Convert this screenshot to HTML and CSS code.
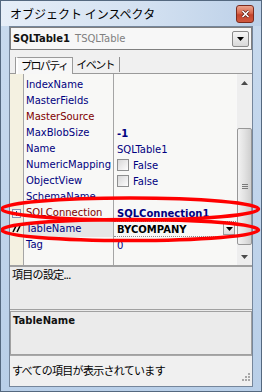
FILE: index.html
```html
<!DOCTYPE html>
<html lang="ja">
<head>
  <meta charset="UTF-8" />
  <title>オブジェクト インスペクタ</title>
  <link rel="stylesheet" href="styles.css">
</head>
<body>
  <div class="window">
    <div class="titlebar">
      <span class="title">オブジェクト インスペクタ</span>
      <span class="close">
        <svg width="9" height="8" viewBox="0 0 9 8"><path d="M1.5 1 L7.5 7 M7.5 1 L1.5 7" stroke="#5a1a10" stroke-width="3"/><path d="M1.5 1 L7.5 7 M7.5 1 L1.5 7" stroke="#fff" stroke-width="1.6"/></svg>
      </span>
    </div>

    <div class="client">
      <div class="combo">
        <span class="combo-name">SQLTable1</span>
        <span class="combo-type">TSQLTable</span>
        <span class="combo-btn"><svg width="7" height="4" viewBox="0 0 7 4"><path d="M0 0 H7 L3.5 4 Z" fill="#000"/></svg></span>
      </div>

      <div class="tabs">
        <span class="tab active">プロパティ</span>
        <span class="tab">イベント</span>
      </div>

      <div class="inspector">
        <div class="grid">
          <div class="row ghost"><span class="gutter"></span><span class="name"></span><span class="value"></span></div>
          <div class="row"><span class="gutter"></span><span class="name">IndexName</span><span class="value"></span></div>
          <div class="row"><span class="gutter"></span><span class="name">MasterFields</span><span class="value"></span></div>
          <div class="row"><span class="gutter"></span><span class="name link">MasterSource</span><span class="value"></span></div>
          <div class="row"><span class="gutter"></span><span class="name">MaxBlobSize</span><span class="value bold">-1</span></div>
          <div class="row"><span class="gutter"></span><span class="name">Name</span><span class="value">SQLTable1</span></div>
          <div class="row"><span class="gutter"></span><span class="name">NumericMapping</span><span class="value"><span class="check"></span>False</span></div>
          <div class="row"><span class="gutter"></span><span class="name">ObjectView</span><span class="value"><span class="check"></span>False</span></div>
          <div class="row"><span class="gutter"></span><span class="name">SchemaName</span><span class="value"></span></div>
          <div class="row">
            <span class="gutter"><svg width="9" height="9" viewBox="0 0 9 9"><rect x="0.5" y="0.5" width="8" height="8" fill="#f4f6fb" stroke="#8593b5"/><path d="M2 4.5 H7 M4.5 2 V7" stroke="#1d2f7a"/></svg></span>
            <span class="name link">SQLConnection</span><span class="value bold">SQLConnection1</span>
          </div>
          <div class="row selected">
            <span class="gutter"><svg width="10" height="8" viewBox="0 0 10 8"><path d="M1 7 L4 1 M5 7 L8 1" stroke="#000" stroke-width="1.6"/></svg></span>
            <span class="name">TableName</span>
            <span class="value bold black">BYCOMPANY<span class="drop"><svg width="7" height="4" viewBox="0 0 7 4"><path d="M0 0 H7 L3.5 4 Z" fill="#000"/></svg></span></span>
          </div>
          <div class="row"><span class="gutter"></span><span class="name">Tag</span><span class="value">0</span></div>
          <div class="row filler"><span class="gutter"></span><span class="name"></span><span class="value"></span></div>
        </div>

        <div class="scrollbar">
          <span class="arrow"><svg width="7" height="4" viewBox="0 0 7 4"><path d="M0 4 H7 L3.5 0 Z" fill="#4a4a4a"/></svg></span>
          <span class="thumb"><span class="grip"></span></span>
          <span class="track"></span>
          <span class="arrow"><svg width="7" height="4" viewBox="0 0 7 4"><path d="M0 0 H7 L3.5 4 Z" fill="#4a4a4a"/></svg></span>
        </div>
      </div>

      <div class="desc">項目の設定...</div>
      <div class="help"><b>TableName</b></div>
      <div class="status">
        すべての項目が表示されています
        <svg class="sizegrip" width="10" height="10" viewBox="0 0 10 10">
          <rect x="7" y="7" width="2" height="2" fill="#a8a8a8"/>
          <rect x="4" y="7" width="2" height="2" fill="#a8a8a8"/>
          <rect x="7" y="4" width="2" height="2" fill="#a8a8a8"/>
          <rect x="1" y="7" width="2" height="2" fill="#a8a8a8"/>
          <rect x="4" y="4" width="2" height="2" fill="#a8a8a8"/>
          <rect x="7" y="1" width="2" height="2" fill="#a8a8a8"/>
        </svg>
      </div>
    </div>

    <!-- hand drawn highlight marks -->
    <svg class="marks" width="262" height="392" viewBox="0 0 262 392">
      <ellipse cx="130" cy="209" rx="128.5" ry="11" fill="none" stroke="#ff0000" stroke-width="3.5"/>
      <ellipse cx="130" cy="230" rx="128.5" ry="10.5" fill="none" stroke="#ff0000" stroke-width="3.5"/>
    </svg>
  </div>
</body>
</html>
```

FILE: styles.css
```css
* { box-sizing: border-box; }
body { margin: 0; background: #fff; }

.window { position: relative; width: 262px; height: 392px; border: 1px solid #54687f; background: linear-gradient(#c8daee, #b9cfe8); font-family: "DejaVu Sans", sans-serif; font-size: 10px; overflow: hidden; }

.titlebar { height: 25px; display: flex; align-items: center; padding-left: 9px; background: linear-gradient(to right, #e6eef8, #d3e1f1 55%, #bcd0e8); }
.title { font-family: "Noto Sans CJK JP", sans-serif; font-size: 12px; color: #000; }
.close { margin-left: auto; margin-right: 7px; width: 18px; height: 18px; border: 1px solid #7b2b1e; border-radius: 3px; background: linear-gradient(#eba48e, #d8674c 45%, #c4432c 55%, #d0593f); display: flex; align-items: center; justify-content: center; }

.client { height: 361px; margin: 0 8px; border: 1px solid #75869b; background: #f0f0f0; display: flex; flex-direction: column; }

.combo { height: 23px; border: 1px solid #7f7f7f; background: #f7f7f7; display: flex; align-items: center; padding-left: 2px; }
.combo-name { font-weight: bold; color: #111; }
.combo-type { margin-left: 5px; color: #808080; }
.combo-btn { margin-left: auto; margin-right: 2px; width: 17px; height: 16px; border: 1px solid #8a8a8a; border-radius: 2px; background: linear-gradient(#f6f6f6, #d9d9d9); display: flex; align-items: center; justify-content: center; }

.tabs { height: 24px; display: flex; align-items: flex-end; padding-left: 6px; border-bottom: 1px solid #9a9a9a; font-family: "Noto Sans CJK JP", sans-serif; font-size: 11px; letter-spacing: -1.6px; }
.tab { height: 15px; line-height: 14px; padding: 0 5px 0 3px; border-right: 1px solid #909090; margin-bottom: 1px; }
.tab.active { height: 17px; margin-bottom: -1px; border: 1px solid #9a9a9a; border-bottom: none; border-left: 2px solid #fff; box-shadow: -1px 0 0 #9a9a9a; background: #f7f7f7; }

.inspector { height: 193px; display: flex; border-bottom: 2px solid; border-bottom-color: #a0a0a0; }
.grid { flex: 1; display: flex; flex-direction: column; background: #f8f8f6; overflow: hidden; }
.row { height: 16px; display: grid; grid-template-columns: 14px 90px 1fr; flex: none; }
.row.ghost { height: 3px; }
.row.filler { flex: 1; }
.gutter { background: #f4f1e1; border-right: 1px solid #a5a5a5; display: flex; align-items: center; justify-content: center; }
.name { border-right: 1px solid #a5a5a5; padding-left: 2px; line-height: 16px; color: #000080; white-space: nowrap; overflow: hidden; }
.name.link { color: #800000; }
.value { display: flex; align-items: center; padding-left: 3px; color: #000080; white-space: nowrap; position: relative; }
.value.bold { font-weight: bold; }
.value.black { color: #000; }
.row.selected .name { background: #e6e6e6; }
.row.selected .value { border-bottom: 1px dotted #8a8a8a; border-top: 1px dotted #8a8a8a; }
.check { width: 12px; height: 12px; margin-right: 4px; border: 1px solid #8e8f8f; background: linear-gradient(135deg, #d8d8d8, #fdfdfd); }
.drop { position: absolute; right: 1px; top: 1px; width: 12px; height: 12px; border: 1px solid #9a9a9a; background: linear-gradient(#fafafa, #dcdcdc); display: flex; align-items: center; justify-content: center; }

.scrollbar { width: 16px; display: flex; flex-direction: column; background: #eeeeee; border-left: 1px solid #f8f8f8; }
.arrow { height: 17px; display: flex; align-items: center; justify-content: center; flex: none; }
.thumb { margin-top: 37px; height: 117px; border: 1px solid #979797; border-radius: 2px; background: linear-gradient(to right, #f2f2f2, #e2e2e2 50%, #cfcfcf); display: flex; align-items: center; justify-content: center; flex: none; }
.grip { width: 6px; height: 5px; border-top: 1px solid #7a7a7a; border-bottom: 1px solid #7a7a7a; background: linear-gradient(#7a7a7a, #7a7a7a) center / 6px 1px no-repeat; }
.track { flex: 1; }

.desc { height: 45px; padding-left: 2px; background: #ebebeb; font-family: "Noto Sans CJK JP", sans-serif; font-size: 11px; line-height: 14px; letter-spacing: -0.7px; border-bottom: 3px double #a0a0a0; }
.help { height: 43px; border: 1px solid #a0a0a0; border-top: none; background: #ebebeb; padding: 2px 2px 0; line-height: 14px; color: #111; }
.status { height: 28px; position: relative; display: flex; align-items: center; padding-left: 2px; border-top: 1px solid #a8a8a8; background: #f0f0f0; font-family: "Noto Sans CJK JP", sans-serif; font-size: 11px; letter-spacing: -0.7px; }
.sizegrip { position: absolute; right: 1px; bottom: 1px; }

.marks { position: absolute; left: -1px; top: -1px; pointer-events: none; }
```
